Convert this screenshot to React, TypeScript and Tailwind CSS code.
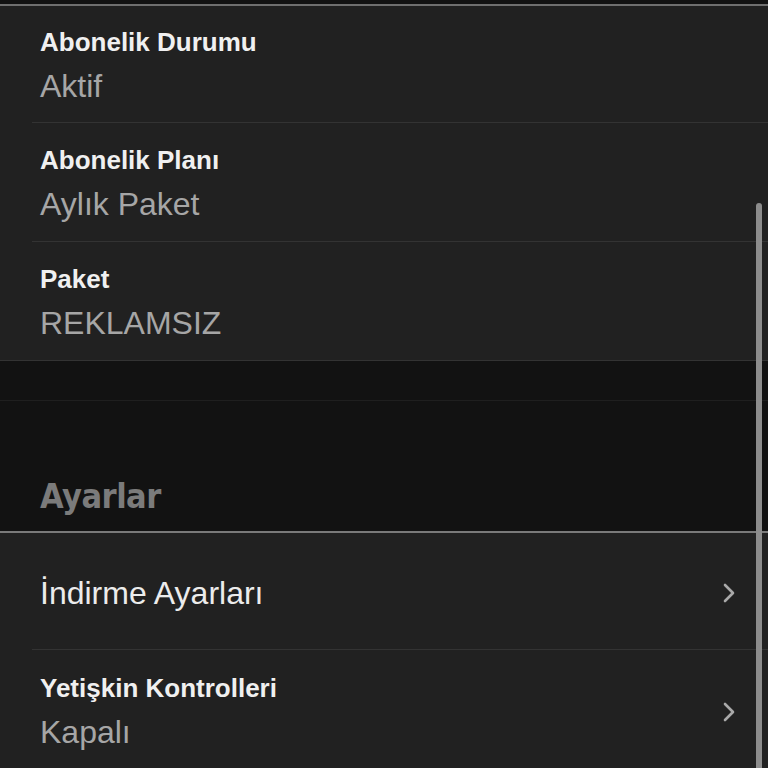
const sans = { fontFamily: '"Liberation Sans", Arial, sans-serif' };

function Chevron() {
  return (
    <svg width="14" height="22" viewBox="0 0 14 22" fill="none" className="shrink-0">
      <path d="M3 3 L11 11 L3 19" stroke="#a9a9a9" strokeWidth="2.6" strokeLinecap="round" strokeLinejoin="round" />
    </svg>
  );
}

export default function App() {
  return (
    <div className="relative w-[768px] h-[768px] overflow-hidden bg-[#121212]" style={sans}>
      <div className="h-[4px] bg-[#121212]" />
      <div className="h-[2px] bg-[#6f6f6f]" />

      {/* Abonelik bilgileri */}
      <section className="bg-[#212121] pl-8">
        <div className="h-[117px] pl-2 pt-[4px] flex flex-col justify-center border-b border-[#333333]">
          <div className="text-[26px] font-bold text-[#f0f0f0] leading-[32px]">Abonelik Durumu</div>
          <div className="text-[32px] text-[#a6a6a6] leading-[40px] mt-[8px]">Aktif</div>
        </div>
        <div className="h-[119px] pl-2 pt-[4px] flex flex-col justify-center border-b border-[#333333]">
          <div className="text-[26px] font-bold text-[#f0f0f0] leading-[32px]">Abonelik Planı</div>
          <div className="text-[32px] text-[#a6a6a6] leading-[40px] mt-[8px]">Aylık Paket</div>
        </div>
        <div className="h-[118px] pl-2 pt-[4px] flex flex-col justify-center">
          <div className="text-[26px] font-bold text-[#f0f0f0] leading-[32px]">Paket</div>
          <div className="text-[32px] text-[#a6a6a6] leading-[40px] mt-[8px]">REKLAMSIZ</div>
        </div>
      </section>

      {/* Ayarlar başlığı */}
      <div className="border-t border-[#333333] h-[40px]" />
      <div className="border-t border-[#1f1f1f] h-[131px] pl-10 flex items-end pb-[15px]">
        <div
          className="text-[34px] font-bold text-[#7b7b7b] leading-[40px] tracking-[-0.5px]"
          style={{ fontFamily: '"Liberation Sans Narrow", "DejaVu Sans Condensed", "Arial Narrow", sans-serif' }}
        >
          Ayarlar
        </div>
      </div>
      <div className="h-[2px] bg-[#7a7a7a]" />

      {/* Ayarlar listesi */}
      <section className="bg-[#212121] pl-8 h-[240px]">
        <div className="h-[117px] pl-2 pr-8 pt-[4px] flex items-center justify-between border-b border-[#333333]">
          <div className="text-[32px] text-[#ececec]">İndirme Ayarları</div>
          <Chevron />
        </div>
        <div className="h-[120px] pl-2 pr-8 pt-[4px] flex items-center justify-between">
          <div className="flex flex-col">
            <div className="text-[26px] font-bold text-[#f0f0f0] leading-[32px]">Yetişkin Kontrolleri</div>
            <div className="text-[32px] text-[#a6a6a6] leading-[40px] mt-[8px]">Kapalı</div>
          </div>
          <Chevron />
        </div>
      </section>

      {/* kaydırma çubuğu */}
      <div className="absolute left-[756px] top-[203px] w-[6px] h-[580px] rounded-full bg-[#8c8c8c]" />
    </div>
  );
}
